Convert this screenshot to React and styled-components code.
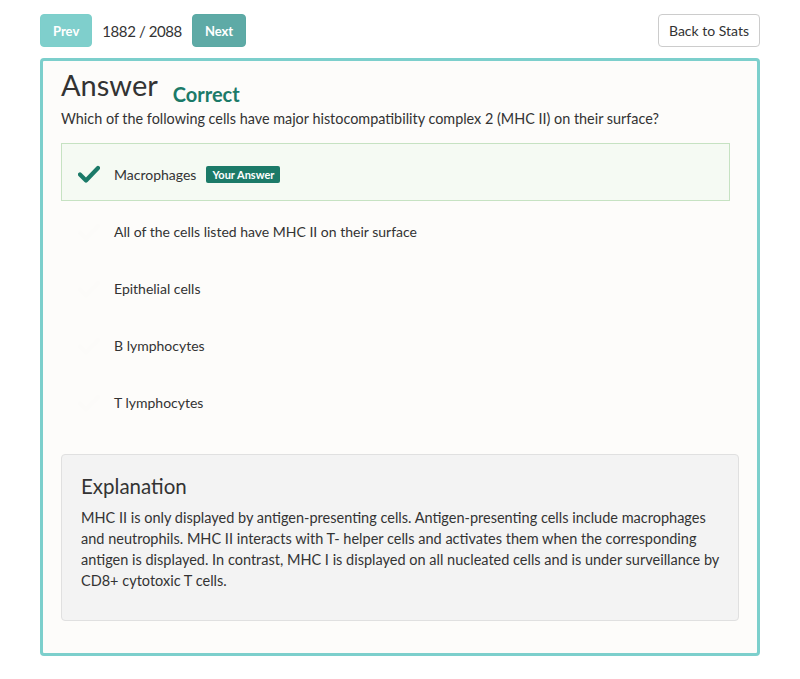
import React from "react";
import styled, { createGlobalStyle } from "styled-components";

const GlobalStyle = createGlobalStyle`
  body {
    margin: 0;
    background: #fff;
    font-family: Lato, "Open Sans", sans-serif;
    color: #333;
  }
  * { box-sizing: border-box; }
`;

const Page = styled.div`
  width: 800px;
  padding: 14px 40px 20px 40px;
`;

const TopBar = styled.div`
  display: flex;
  align-items: center;
  height: 33px;
  margin-bottom: 11px;
`;

const NavBtn = styled.button`
  height: 33px;
  padding: 0 12px;
  border: 1px solid ${(p) => (p.$dark ? "#5aa9a4" : "#7ccfcb")};
  border-radius: 4px;
  background: ${(p) => (p.$dark ? "#5eaaa6" : "#7fcfcc")};
  color: #fff;
  font-family: Lato, sans-serif;
  font-weight: 700;
  font-size: 13px;
`;

const Counter = styled.span`
  font-size: 15px;
  letter-spacing: -0.4px;
  margin: 0 10px;
  color: #333;
`;

const BackBtn = styled.button`
  margin-left: auto;
  height: 33px;
  padding: 0 10px;
  background: #fff;
  border: 1px solid #ccc;
  border-radius: 4px;
  font-family: Lato, sans-serif;
  font-size: 14px;
  color: #333;
`;

const Card = styled.div`
  border: 3px solid #7ccfcc;
  border-radius: 4px;
  background: #fdfcfa;
  padding: 4px 18px 32px 18px;
`;

const TitleRow = styled.div`
  display: flex;
  align-items: baseline;
  height: 44px;
`;

const Title = styled.h1`
  margin: 0;
  font-size: 29px;
  font-weight: 400;
  line-height: 40px;
  color: #333;
`;

const Verdict = styled.span`
  font-size: 20px;
  font-weight: 700;
  color: #1b7a68;
  margin-left: 15px;
  position: relative;
  top: 6px;
`;

const Question = styled.p`
  margin: 0 0 14px 0;
  font-size: 14.4px;
  line-height: 20px;
`;

const Options = styled.div`
  margin-right: 9px;
  margin-bottom: 25px;
`;

const Option = styled.div`
  display: flex;
  align-items: center;
  height: ${(p) => (p.$selected ? "58px" : "57px")};
  padding: 4px 16px 0 16px;
  border: 1px solid ${(p) => (p.$selected ? "#c6e2c2" : "transparent")};
  background: ${(p) => (p.$selected ? "#f5faf3" : "transparent")};
  font-size: 14px;
`;

const CheckWrap = styled.span`
  width: 22px;
  display: flex;
  margin-right: 14px;
  color: ${(p) => (p.$on ? "#1b7a68" : "#fcfbf9")};
`;

const Badge = styled.span`
  margin-left: 10px;
  background: #1b7a68;
  color: #fff;
  font-size: 11px;
  font-weight: 700;
  padding: 2px 6px;
  border-radius: 2px;
`;

const Explanation = styled.div`
  background: #f3f3f3;
  border: 1px solid #e0e0e0;
  border-radius: 4px;
  padding: 17px 19px 29px 19px;
`;

const ExplTitle = styled.h3`
  margin: 0 0 7px 0;
  font-size: 20.5px;
  font-weight: 400;
  line-height: 28px;
`;

const ExplText = styled.p`
  margin: 0;
  font-size: 14.5px;
  line-height: 21px;
`;

const Check = () => (
  <svg width="22" height="18" viewBox="0 0 22 18">
    <path d="M2 9.5 L8 15.5 L20 3" fill="none" stroke="currentColor" strokeWidth="4.2" strokeLinecap="round" strokeLinejoin="round" />
  </svg>
);

const answers = [
  { text: "Macrophages", selected: true },
  { text: "All of the cells listed have MHC II on their surface" },
  { text: "Epithelial cells" },
  { text: "B lymphocytes" },
  { text: "T lymphocytes" },
];

export default function App() {
  return (
    <Page>
      <GlobalStyle />
      <TopBar>
        <NavBtn>Prev</NavBtn>
        <Counter>1882 / 2088</Counter>
        <NavBtn $dark>Next</NavBtn>
        <BackBtn>Back to Stats</BackBtn>
      </TopBar>
      <Card>
        <TitleRow>
          <Title>Answer</Title>
          <Verdict>Correct</Verdict>
        </TitleRow>
        <Question>
          Which of the following cells have major histocompatibility complex 2 (MHC II) on their surface?
        </Question>
        <Options>
          {answers.map((a) => (
            <Option key={a.text} $selected={a.selected}>
              <CheckWrap $on={a.selected}>
                <Check />
              </CheckWrap>
              {a.text}
              {a.selected && <Badge>Your Answer</Badge>}
            </Option>
          ))}
        </Options>
        <Explanation>
          <ExplTitle>Explanation</ExplTitle>
          <ExplText>
            MHC II is only displayed by antigen-presenting cells. Antigen-presenting cells include macrophages and
            neutrophils. MHC II interacts with T- helper cells and activates them when the corresponding antigen is
            displayed. In contrast, MHC I is displayed on all nucleated cells and is under surveillance by CD8+
            cytotoxic T cells.
          </ExplText>
        </Explanation>
      </Card>
    </Page>
  );
}
